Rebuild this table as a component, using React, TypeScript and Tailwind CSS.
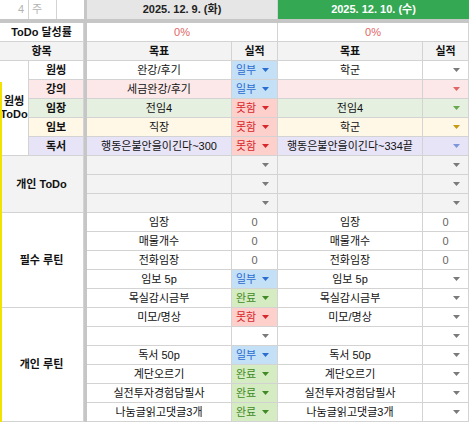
import React from "react";

type Tone = "white" | "pink" | "green" | "yellow" | "purple" | "gray";
type Mark = "일부" | "못함" | "완료" | "0" | "v" | "";

const rowBg: Record<Tone, string> = {
  white: "bg-white",
  pink: "bg-[#fce8e8]",
  green: "bg-[#e5f0e0]",
  yellow: "bg-[#fff8e6]",
  purple: "bg-[#e8e4f7]",
  gray: "bg-[#f3f3f3]",
};

const arrowColor: Record<string, string> = {
  gray: "#7a7a7a",
  red: "#e06666",
  green: "#6aa84f",
  yellow: "#c79a12",
  blue: "#7c96dc",
};

interface Row {
  tone: Tone;
  goal1: string;
  mark1: Mark;
  goal2: string;
  mark2: Mark;
  arrow2?: string;
}

const rows: Row[] = [
  // 원씽 ToDo
  { tone: "white", goal1: "완강/후기", mark1: "일부", goal2: "학군", mark2: "v", arrow2: "gray" },
  { tone: "pink", goal1: "세금완강/후기", mark1: "일부", goal2: "", mark2: "v", arrow2: "red" },
  { tone: "green", goal1: "전임4", mark1: "못함", goal2: "전임4", mark2: "v", arrow2: "green" },
  { tone: "yellow", goal1: "직장", mark1: "못함", goal2: "학군", mark2: "v", arrow2: "yellow" },
  { tone: "purple", goal1: "행동은불안을이긴다~300", mark1: "못함", goal2: "행동은불안을이긴다~334끝", mark2: "v", arrow2: "blue" },
  // 개인 ToDo
  { tone: "gray", goal1: "", mark1: "v", goal2: "", mark2: "v" },
  { tone: "gray", goal1: "", mark1: "v", goal2: "", mark2: "v" },
  { tone: "gray", goal1: "", mark1: "v", goal2: "", mark2: "v" },
  // 필수 루틴
  { tone: "white", goal1: "임장", mark1: "0", goal2: "임장", mark2: "0" },
  { tone: "white", goal1: "매물개수", mark1: "0", goal2: "매물개수", mark2: "0" },
  { tone: "white", goal1: "전화임장", mark1: "0", goal2: "전화임장", mark2: "0" },
  { tone: "white", goal1: "임보 5p", mark1: "일부", goal2: "임보 5p", mark2: "v" },
  { tone: "white", goal1: "목실감시금부", mark1: "완료", goal2: "목실감시금부", mark2: "v" },
  // 개인 루틴
  { tone: "white", goal1: "미모/명상", mark1: "못함", goal2: "미모/명상", mark2: "v" },
  { tone: "white", goal1: "", mark1: "v", goal2: "", mark2: "v" },
  { tone: "white", goal1: "독서 50p", mark1: "일부", goal2: "독서 50p", mark2: "v" },
  { tone: "white", goal1: "계단오르기", mark1: "완료", goal2: "계단오르기", mark2: "v" },
  { tone: "white", goal1: "실전투자경험담필사", mark1: "완료", goal2: "실전투자경험담필사", mark2: "v" },
  { tone: "white", goal1: "나눔글읽고댓글3개", mark1: "완료", goal2: "나눔글읽고댓글3개", mark2: "v" },
];

const cell = "border-r border-b border-[#d3d3d3] flex items-center";

function Arrow({ color }: { color: string }) {
  return (
    <svg width="7" height="4" viewBox="0 0 7 4">
      <path d="M0 0 L7 0 L3.5 4 Z" fill={color} />
    </svg>
  );
}

function MarkCell({ mark, tone, arrow }: { mark: Mark; tone: Tone; arrow?: string }) {
  if (mark === "일부" || mark === "못함" || mark === "완료") {
    const chip =
      mark === "일부"
        ? { bg: "bg-[#c3e0f7]", text: "text-[#2b6cd0]", c: "#2b6cd0" }
        : mark === "못함"
        ? { bg: "bg-[#fdd0cc]", text: "text-[#d8262a]", c: "#d8262a" }
        : { bg: "bg-[#d5ebc2]", text: "text-[#3f8a25]", c: "#3f8a25" };
    return (
      <div className={`${cell} ${chip.bg} justify-between pl-[4px] pr-[8px]`}>
        <span className={chip.text}>{mark}</span>
        <Arrow color={chip.c} />
      </div>
    );
  }
  if (mark === "0") {
    return <div className={`${cell} ${rowBg[tone]} justify-center text-[#666]`}>0</div>;
  }
  return (
    <div className={`${cell} ${rowBg[tone]} justify-end pr-[8px]`}>
      {mark === "v" && <Arrow color={arrowColor[arrow ?? "gray"]} />}
    </div>
  );
}

export default function App() {
  return (
    <div
      className="relative w-[469px] h-[422px] overflow-hidden bg-white text-[11px] text-[#111] leading-none"
      style={{ fontFamily: '"Liberation Sans", "Noto Sans CJK KR", sans-serif' }}
    >
      {/* 상단 날짜 행 */}
      <div className="flex h-[19px]">
        <div className="flex w-[84px]">
          <div className="w-[29px] border-r border-[#d3d3d3] flex items-center justify-end pr-[4px] text-[#b3b3b3]">4</div>
          <div className="w-[28px] border-r border-[#d3d3d3] flex items-center pl-[3px] text-[#b3b3b3]">주</div>
          <div className="w-[27px]" />
        </div>
        <div className="w-[3px] bg-[#c6c6c6]" />
        <div className="w-[191px] bg-[#e6e6e6] border-r border-[#d3d3d3] flex items-center justify-center font-bold text-[#222]">
          2025. 12. 9. (화)
        </div>
        <div className="w-[191px] bg-[#34a853] flex items-center justify-center font-bold text-white">
          2025. 12. 10. (수)
        </div>
      </div>
      <div className="h-[4px] bg-[#c6c6c6]" />

      <div className="flex">
        {/* 항목 열 */}
        <div className="grid w-[84px] grid-cols-[29px_55px] grid-rows-[repeat(21,19px)] font-bold">
          <div className={`${cell} col-span-2 justify-center bg-white`}>ToDo 달성률</div>
          <div className={`${cell} col-span-2 justify-center bg-[#f3f3f3]`}>항목</div>
          <div className={`${cell} row-span-5 flex-col justify-center bg-white leading-[13px]`}>
            <span>원씽</span>
            <span>ToDo</span>
          </div>
          <div className={`${cell} justify-center bg-white`}>원씽</div>
          <div className={`${cell} justify-center ${rowBg.pink}`}>강의</div>
          <div className={`${cell} justify-center ${rowBg.green}`}>임장</div>
          <div className={`${cell} justify-center ${rowBg.yellow}`}>임보</div>
          <div className={`${cell} justify-center ${rowBg.purple}`}>독서</div>
          <div className={`${cell} col-span-2 row-span-3 justify-center bg-[#f3f3f3]`}>개인 ToDo</div>
          <div className={`${cell} col-span-2 row-span-5 justify-center bg-white`}>필수 루틴</div>
          <div className={`${cell} col-span-2 row-span-6 justify-center bg-white`}>개인 루틴</div>
        </div>

        <div className="w-[3px] bg-[#c6c6c6]" />

        {/* 날짜별 목표/실적 */}
        <div className="grid w-[382px] grid-cols-[145px_46px_145px_46px] grid-rows-[repeat(21,19px)]">
          <div className={`${cell} col-span-2 justify-center bg-white text-[#e06666]`}>0%</div>
          <div className={`${cell} col-span-2 justify-center bg-white text-[#e06666]`}>0%</div>
          <div className={`${cell} justify-center bg-[#f3f3f3] font-bold`}>목표</div>
          <div className={`${cell} justify-center bg-[#f3f3f3] font-bold`}>실적</div>
          <div className={`${cell} justify-center bg-[#f3f3f3] font-bold`}>목표</div>
          <div className={`${cell} justify-center bg-[#f3f3f3] font-bold`}>실적</div>
          {rows.map((r, i) => (
            <React.Fragment key={i}>
              <div className={`${cell} justify-center whitespace-nowrap ${rowBg[r.tone]}`}>{r.goal1}</div>
              <MarkCell mark={r.mark1} tone={r.tone} />
              <div className={`${cell} justify-center whitespace-nowrap ${rowBg[r.tone]}`}>{r.goal2}</div>
              <MarkCell mark={r.mark2} tone={r.tone} arrow={r.arrow2} />
            </React.Fragment>
          ))}
        </div>
      </div>

      {/* 선택 표시 */}
      <div className="absolute left-0 top-[82px] bottom-0 w-[2px] bg-[#f2e200]" />
    </div>
  );
}
